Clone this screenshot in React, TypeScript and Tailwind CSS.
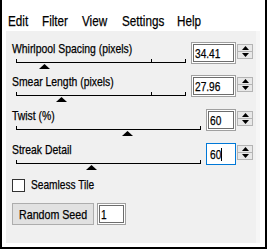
import React from "react";

const FONT = "font-['Liberation_Sans',Arial,sans-serif] [-webkit-text-stroke:0.25px_#000]";

function Thumb({ left }: { left: number }) {
  return (
    <svg
      className="absolute"
      style={{ left, top: 8 }}
      width={11}
      height={5}
      viewBox="0 0 11 5"
    >
      <polygon points="5.5,0 11,5 0,5" fill="#000" />
    </svg>
  );
}

function Slider({
  length,
  ticks,
  thumb,
}: {
  length: number;
  ticks: number[];
  thumb: number;
}) {
  return (
    <div className="relative h-[14px] ml-[4px]" style={{ width: length }}>
      <div className="absolute left-0 right-0 top-[6px] h-px bg-black" />
      {ticks.map((t) => (
        <div
          key={t}
          className="absolute top-[3px] h-[4px] w-px bg-black"
          style={{ left: t }}
        />
      ))}
      <Thumb left={thumb - 5} />
    </div>
  );
}

function Spinner() {
  return (
    <div className="mt-[2px] ml-[1px] w-[16px] h-[15px] border border-[#b4b4b4] bg-[#e8e8e8] flex flex-col">
      <div className="flex-1 flex items-center justify-center border-b border-[#b4b4b4]">
        <svg width="7" height="4" viewBox="0 0 7 4">
          <polygon points="3.5,0 7,4 0,4" fill="#000" />
        </svg>
      </div>
      <div className="flex-1 flex items-center justify-center">
        <svg width="7" height="4" viewBox="0 0 7 4">
          <polygon points="0,0 7,0 3.5,4" fill="#000" />
        </svg>
      </div>
    </div>
  );
}

function NumBox({
  value,
  width,
  focused,
}: {
  value: string;
  width: number;
  focused?: boolean;
}) {
  if (focused) {
    return (
      <div
        className="h-[22px] border border-[#0078d7] bg-white flex items-center pl-[3px] text-[13px] leading-none whitespace-nowrap"
        style={{ width }}
      >
        <span className="inline-block origin-left scale-x-[0.78]">{value}</span>
        <span className="-ml-[3px] w-px h-[13px] bg-black" />
      </div>
    );
  }
  return (
    <div
      className="h-[22px] border border-[#a0a0a0] bg-white p-px"
      style={{ width }}
    >
      <div className="h-full border border-[#6d6d6d] flex items-center pl-[1px] text-[13px] leading-none whitespace-nowrap">
        <span className="inline-block origin-left scale-x-[0.78]">{value}</span>
      </div>
    </div>
  );
}

function Row({
  label,
  length,
  ticks,
  thumb,
  value,
  boxWidth,
  focused,
  mt,
}: {
  label: string;
  length: number;
  ticks: number[];
  thumb: number;
  value: string;
  boxWidth: number;
  focused?: boolean;
  mt: string;
}) {
  return (
    <div className={`flex items-start ${mt}`}>
      <div className="flex-1 flex flex-col">
        <div className="h-[14px] leading-[14px] text-[13px] whitespace-nowrap">
          <span className="inline-block origin-left scale-x-[0.8]">{label}</span>
        </div>
        <Slider length={length} ticks={ticks} thumb={thumb} />
      </div>
      <NumBox value={value} width={boxWidth} focused={focused} />
      <Spinner />
    </div>
  );
}

function MenuItem({ w, children }: { w: string; children: React.ReactNode }) {
  return (
    <div className={`${w} whitespace-nowrap`}>
      <span className="inline-block origin-left scale-x-[0.78]">{children}</span>
    </div>
  );
}

export default function App() {
  return (
    <div
      className={`w-[267px] h-[249px] bg-white border-l-2 border-r-2 border-b-2 border-black flex flex-col text-black ${FONT}`}
    >
      <div className="h-[31px] flex items-start pt-[13px] pl-[6px] text-[15px] leading-[16px]">
        <MenuItem w="w-[34px]">Edit</MenuItem>
        <MenuItem w="w-[40px]">Filter</MenuItem>
        <MenuItem w="w-[40px]">View</MenuItem>
        <MenuItem w="w-[55px]">Settings</MenuItem>
        <MenuItem w="w-[30px]">Help</MenuItem>
      </div>
      <div className="ml-[4px] w-[254px] h-[212px] bg-[#f0f0f0] border-r-4 border-[#f6f6f6] pl-[6px] pr-[3px] pt-[11px] flex flex-col">
        <Row
          mt="mt-0"
          label="Whirlpool Spacing (pixels)"
          length={170}
          ticks={[0, 135, 169]}
          thumb={28}
          value="34.41"
          boxWidth={45}
        />
        <Row
          mt="mt-[5px]"
          label="Smear Length (pixels)"
          length={170}
          ticks={[0, 135, 169]}
          thumb={45}
          value="27.96"
          boxWidth={45}
        />
        <Row
          mt="mt-[6px]"
          label="Twist (%)"
          length={185}
          ticks={[0, 184]}
          thumb={111}
          value="60"
          boxWidth={30}
        />
        <Row
          mt="mt-[6px]"
          label="Streak Detail"
          length={185}
          ticks={[0, 184]}
          thumb={75}
          value="60"
          boxWidth={30}
          focused
        />
        <label className="mt-[7px] flex items-center h-[14px] text-[13px] whitespace-nowrap">
          <span className="w-[13px] h-[13px] border border-[#333] bg-white" />
          <span className="ml-[6px] inline-block origin-left scale-x-[0.78]">Seamless Tile</span>
        </label>
        <div className="mt-[11px] flex items-center">
          <button className="w-[82px] h-[22px] border border-[#adadad] bg-[#e1e1e1] text-[13px] leading-none whitespace-nowrap text-left pl-[6px]">
            <span className="inline-block origin-left scale-x-[0.82]">Random Seed</span>
          </button>
          <div className="ml-[3px]">
            <NumBox value="1" width={29} />
          </div>
        </div>
      </div>
    </div>
  );
}
